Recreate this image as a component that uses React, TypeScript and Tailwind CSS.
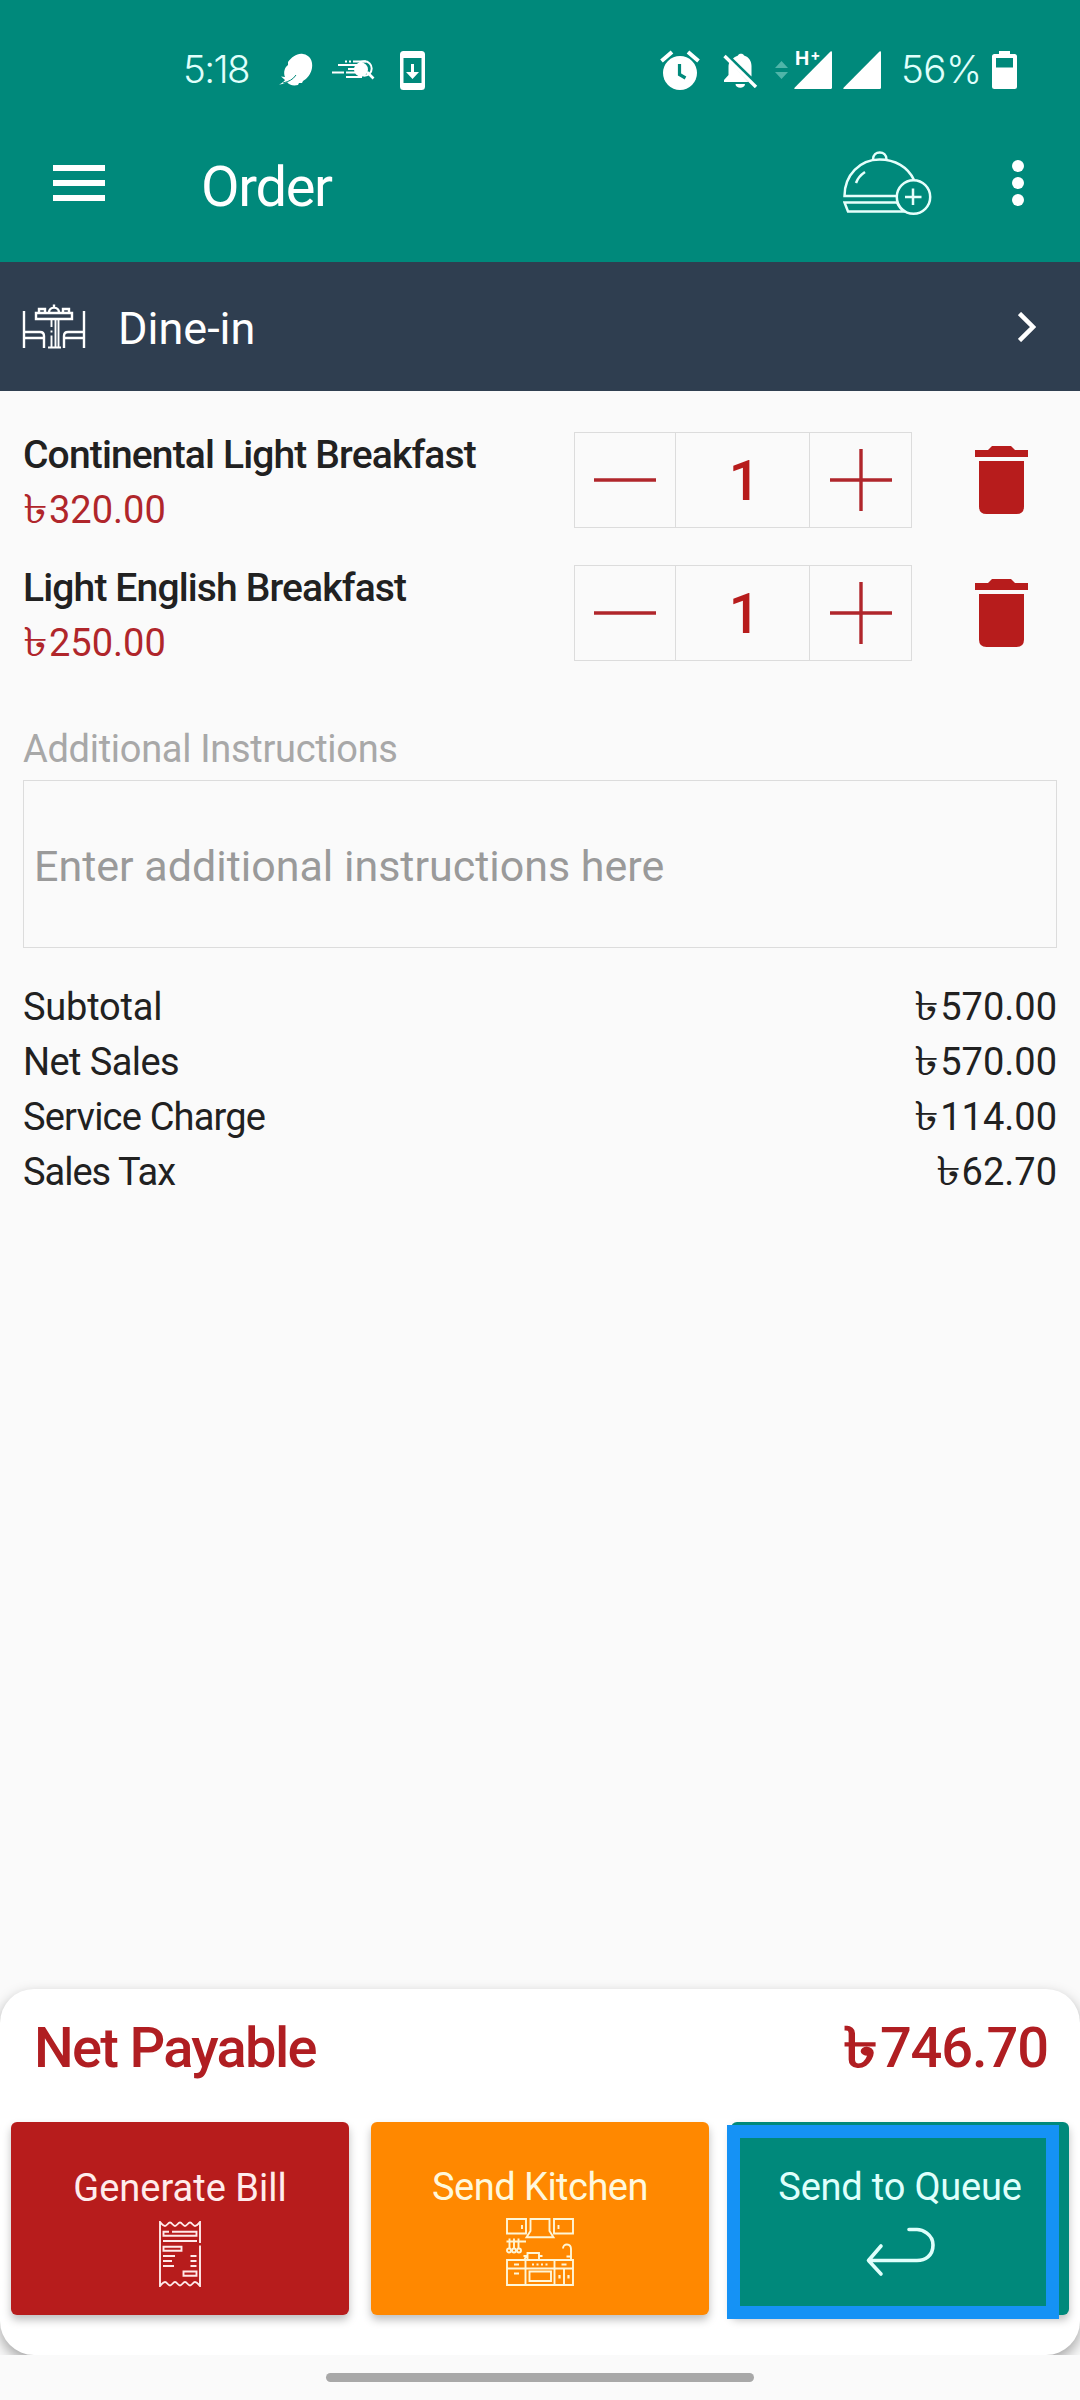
import React from 'react';
import clsx from 'clsx';

const items = [
  { name: 'Continental Light Breakfast', price: '320.00', qty: 1 },
  { name: 'Light English Breakfast', price: '250.00', qty: 1 },
];

const totals = [
  { label: 'Subtotal', amount: '570.00', tracking: 'tracking-[-0.2px]' },
  { label: 'Net Sales', amount: '570.00', tracking: 'tracking-[-0.6px]' },
  { label: 'Service Charge', amount: '114.00', tracking: 'tracking-[-0.8px]' },
  { label: 'Sales Tax', amount: '62.70', tracking: 'tracking-[-1px]' },
];

/* ---------- status bar icons ---------- */

function FeatherIcon() {
  return (
    <svg width="34" height="34" viewBox="0 0 34 34" fill="#fff">
      <path d="M0 31.500 C3 30 5 28.500 6 27 L2 23.500 L6 24 C4 19 6 14 9 12 L9 9 C13 4 18 0 24 1 C31 2 34 8 33 15 C32 21 28 26 24 28 L23 30 L20 30 L19 32 C14 33 10 32 8 29 C5 30.500 3 31.500 0 31.500 Z" />
      <path d="M4 30 C10 28.500 14 26.500 17 22" fill="none" stroke="#00897b" strokeWidth="1" />
    </svg>
  );
}

function FastSearchIcon() {
  return (
    <svg width="43" height="20" viewBox="0 0 43 20" fill="none" stroke="#fff" strokeWidth="2">
      <path d="M13 1.500 H15 M17 1.500 H19 M21 1.500 H34 M6 5 H26 M16 9 H26 M0 12.500 H12 M14 12.500 H26 M14 17 H30" />
      <circle cx="29" cy="9.500" r="6" fill="#fff" />
      <circle cx="32.500" cy="8.500" r="7.200" />
      <path d="M35 12 L41.500 18.500" strokeWidth="2.600" />
    </svg>
  );
}

function PhoneDownloadIcon() {
  return (
    <svg width="25" height="39" viewBox="0 0 25 39">
      <path fill="#fff" fillRule="evenodd" d="M3.500 0 H21.500 Q25 0 25 3.500 V35.500 Q25 39 21.500 39 H3.500 Q0 39 0 35.500 V3.500 Q0 0 3.500 0 Z M3.500 7 V32 H21.500 V7 Z" />
      <path fill="#fff" d="M11 13 H14 V21 H19 L12.500 28 L6 21 H11 Z" />
    </svg>
  );
}

function AlarmIcon() {
  return (
    <svg width="40" height="40" viewBox="0 0 40 40">
      <circle cx="20" cy="23" r="17" fill="#fff" />
      <path d="M1.500 11 L12 2 M38.500 11 L28 2" stroke="#fff" strokeWidth="4" />
      <path d="M19.500 14 V24.500 L25.500 28" fill="none" stroke="#00897b" strokeWidth="3.200" />
    </svg>
  );
}

function BellOffIcon() {
  return (
    <svg width="35" height="35" viewBox="0 0 35 35" fill="#fff">
      <path d="M10 5.500 C12 3.500 14 3 15 2.500 C15.500 0 20.500 0 21 2.500 C26 4 28.500 8 28.500 13 V23.500 Z" />
      <path d="M6.500 9 C5.800 10.500 5.500 12 5.500 14 V22 L1 27 V29 H25.500 Z" />
      <path d="M12.500 31 H22 C22 36 12.500 36 12.500 31 Z" />
      <path d="M1.500 3 L33 34" stroke="#fff" strokeWidth="3.400" />
    </svg>
  );
}

function SignalIcon() {
  return (
    <svg width="38" height="38" viewBox="0 0 38 38" fill="#fff">
      <path d="M36.500 0.500 Q38 -0.500 38 1.500 V36.500 Q38 38 36.500 38 H1.500 Q-0.500 38 0.800 36.500 Z" />
    </svg>
  );
}

function BatteryIcon() {
  return (
    <svg width="25" height="38" viewBox="0 0 25 38" fill="#fff">
      <path fillRule="evenodd" d="M7 0 H18 V3 H22.500 Q25 3 25 5.500 V35.500 Q25 38 22.500 38 H2.500 Q0 38 0 35.500 V5.500 Q0 3 2.500 3 H7 Z M4 7 V16.500 H21 V7 Z" />
    </svg>
  );
}

/* ---------- app icons ---------- */

function ClocheIcon() {
  return (
    <svg width="89" height="65" viewBox="0 0 89 65" fill="none" stroke="#e6fffc" strokeWidth="2.500">
      <path d="M54 45 H1.500 C1.500 24 17 8.500 36.500 8.500 C52 8.500 65 16 71 29" />
      <path d="M30 8.500 C30 -1 43.500 -1 43.500 8.500" />
      <path d="M13 32 C14.500 27.500 17.500 24 22 21" />
      <path d="M54 51.500 H1.500 L5 60.500 H62 C58 58.500 56 56 54 51.500" />
      <circle cx="70.500" cy="46" r="16.700" />
      <path d="M62 46 H78.500 M70 37.500 V54" />
    </svg>
  );
}

function DineInIcon() {
  return (
    <svg width="64" height="45" viewBox="0 0 64 45" fill="none" stroke="#fff" strokeWidth="2.400">
      <path d="M2 7 V44 M2 28 H18 Q22 28 22 32 V44 M2 34 H22" />
      <path d="M62 7 V44 M62 28 H46 Q42 28 42 32 V44 M62 34 H42" />
      <path d="M14 9 H50 V15 H14 Z" />
      <path d="M17 8.500 V5 H23 V8.500 M41 8.500 V5 H47 V8.500" />
      <path d="M27 8.500 C27 2 37 2 37 8.500 M32 0.500 V4" />
      <path d="M29.500 16 V23 M29.500 26.500 V28.500 M29.500 31.500 V43 M33.500 16 V43 M36.500 16 V43 M26 43.500 H39" strokeWidth="1.900" />
    </svg>
  );
}

function TrashIcon() {
  return (
    <svg width="53" height="68" viewBox="0 0 53 68" fill="#b71c1c">
      <path d="M0 4 H13 L17 0 H36 L40 4 H53 V11 H0 Z" />
      <path d="M4 15 H49 V60.500 Q49 68 41.500 68 H11.500 Q4 68 4 60.500 Z" />
    </svg>
  );
}

function ReceiptIcon() {
  return (
    <svg width="42" height="66" viewBox="0 0 42 66" fill="none" stroke="#ffe9e9" strokeWidth="1.900">
      <path d="M41 22 V1 C39 3 38 5 36 5 C34 5 33 1.500 31 1.500 C29 1.500 28 5 26 5 C24 5 23 1.500 21 1.500 C19 1.500 18 5 16 5 C14 5 13 1.500 11 1.500 C9 1.500 8 5 6 5 C4 5 3 3 1 1 V65 C3 63 4 61 6 61 C8 61 9 64.500 11 64.500 C13 64.500 14 61 16 61 C18 61 19 64.500 21 64.500 C23 64.500 24 61 26 61 C28 61 29 64.500 31 64.500 C33 64.500 34 61 36 61 C38 61 39 63 41 65 V24.500" />
      <path d="M10 10.700 H4.500 V14.800 H37.500 V10.700 H13" />
      <path d="M4 20 H38 M4.500 25.800 H22.500 V29.800 H4.500 Z" />
      <path d="M4 35 H16 M4 40 H13 M4 45 H15 M31.500 35 H37.500 M31.500 40 H37.500 M31.500 45 H37.500" />
      <path d="M24.500 50.500 H37.500 V54.800 H24.500 Z" />
    </svg>
  );
}

function KitchenIcon() {
  return (
    <svg width="68" height="68" viewBox="0 0 68 68" fill="none" stroke="#fff6d6" strokeWidth="1.900">
      <path d="M1 1 H20 V15.500 H1 Z M48 1 H67 V15.500 H48 Z M16 7 V11 M52.500 7 V11" />
      <path d="M24.500 1 H43.500 V13 L47.500 19.300 H20.500 L24.500 13 Z" />
      <path d="M0.500 23.500 H20 M3.500 20.500 V30 M8 20.500 V30 M12.500 20.500 V30" />
      <circle cx="3" cy="32.500" r="2" />
      <circle cx="8" cy="32.500" r="2" />
      <circle cx="13" cy="32.500" r="2" />
      <path d="M21.500 41 V35 H33 V41 M17.500 38 H21 M33.500 38 H36.500 M21.500 37 L18.500 41" />
      <path d="M65 41 V31 C65 25 57 25 57 30.500 M65 38.500 H60.500" />
      <path d="M1 42 H67 V67 H1 Z M19.500 42 V67 M48.500 42 V67 M1 50.500 H67 M58 50.500 V67" />
      <path d="M23.500 53.500 H45 V63 H23.500 Z" />
      <path d="M8 46.500 H13 M8 55.500 H13 M55.500 46.500 H60.500 M53.500 57 V60.500 M62.500 57 V60.500 M26 46.500 H28 M30.500 46.500 H32.500 M35 46.500 H37 M39.500 46.500 H41.500" strokeWidth="2.200" />
    </svg>
  );
}

function ReturnIcon() {
  return (
    <svg width="69" height="50" viewBox="0 0 69 50" fill="none" stroke="#dffffb" strokeWidth="3.600" strokeLinecap="round" strokeLinejoin="round">
      <path d="M43 2.500 H51 C56 2.500 67 7 67 18 C67 29 59 33.500 51 33.500 H2.500 M15 19 L2.500 33.500 L15 47" />
    </svg>
  );
}

/* ---------- building blocks ---------- */

function Taka({ amount, large }: { amount: string; large?: boolean }) {
  return (
    <span className="inline-flex items-baseline whitespace-nowrap">
      <span
        className={clsx(
          'inline-block origin-left scale-x-125 leading-none',
          large ? 'mr-[9px] text-[56px] font-bold' : 'mr-[6px] text-[40px]'
        )}
      >
        ৳
      </span>
      <span className={clsx(large && 'tracking-[-1.1px]')}>{amount}</span>
    </span>
  );
}

function Stepper({ qty }: { qty: number }) {
  return (
    <div className="w-[338px] h-24 grid grid-cols-[101px_1fr_101px] border border-[#dcdcdc] divide-x divide-[#dcdcdc]">
      <button className="flex items-center justify-center">
        <svg width="62" height="62" viewBox="0 0 62 62" stroke="#b0262b" strokeWidth="3.400">
          <path d="M0 31 H62" />
        </svg>
      </button>
      <span className="flex items-center justify-center pt-[3px] pl-1 text-[55px] font-medium text-[#b71c1c]">{qty}</span>
      <button className="flex items-center justify-center">
        <svg width="62" height="62" viewBox="0 0 62 62" stroke="#b0262b" strokeWidth="3.400">
          <path d="M0 31 H62 M31 0 V62" />
        </svg>
      </button>
    </div>
  );
}

export default function App() {
  return (
    <div className="w-[1080px] h-[2400px] flex flex-col overflow-hidden bg-[#fafafa] font-['Roboto',sans-serif] text-[#212121]">
      {/* Header */}
      <header className="h-[262px] shrink-0 bg-[#00897b] text-white">
        <div className="h-[140px] flex items-center pl-[183px] pr-[63px] font-['Inter',sans-serif] font-light text-[38.500px]">
          <span className="w-[96px] tracking-[-1.600px] text-[#e0fffb]">5:18</span>
          <FeatherIcon />
          <span className="ml-[19px]"><FastSearchIcon /></span>
          <span className="ml-[25px]"><PhoneDownloadIcon /></span>
          <div className="ml-auto flex items-center">
            <AlarmIcon />
            <span className="ml-[23px]"><BellOffIcon /></span>
            <svg className="ml-[17px]" width="13" height="18" viewBox="0 0 13 18" fill="#4fb5a9">
              <path d="M6.500 0 L13 7 H0 Z M6.500 18 L13 11 H0 Z" />
            </svg>
            <div className="relative ml-[6px]">
              <SignalIcon />
              <span className="absolute left-[1px] top-[-3px] text-[19px] leading-[22px] font-bold">
                H<sup className="relative top-[-5px] left-px text-[15px] leading-none align-baseline">+</sup>
              </span>
            </div>
            <span className="ml-[11px]"><SignalIcon /></span>
            <span className="ml-[20px] w-[91px] tracking-[-0.500px] text-[#e0fffb]">56%</span>
            <BatteryIcon />
          </div>
        </div>
        <div className="h-[86px] flex items-center pl-[53px] pr-[56px]">
          <div className="w-[52px] flex flex-col gap-[9px]">
            <span className="h-[6px] bg-white" />
            <span className="h-[6px] bg-white" />
            <span className="h-[6px] bg-white" />
          </div>
          <h1 className="ml-[96px] pt-[7px] text-[56px] tracking-[-1.300px]">Order</h1>
          <span className="ml-auto"><ClocheIcon /></span>
          <div className="ml-[80px] flex flex-col gap-[5px]">
            <span className="size-3 rounded-full bg-white" />
            <span className="size-3 rounded-full bg-white" />
            <span className="size-3 rounded-full bg-white" />
          </div>
        </div>
      </header>

      {/* Order type */}
      <div className="h-[129px] shrink-0 flex items-center pl-[22px] pr-[44px] bg-[#2f3e50] text-white">
        <DineInIcon />
        <span className="ml-[32px] pt-1 text-[45px]">Dine-in</span>
        <svg className="ml-auto" width="18" height="30" viewBox="0 0 18 30" fill="none" stroke="#fff" strokeWidth="4.500">
          <path d="M1.500 1.500 L15 15 L1.500 28.500" />
        </svg>
      </div>

      <main className="flex-1 min-h-0 flex flex-col overflow-hidden">
        <section className="px-[23px] pt-[37px] flex flex-col gap-[23px]">
          {items.map(item => (
            <div key={item.name} className="h-[110px] flex">
              <div className="w-[551px]">
                <p className="h-[55px] leading-[55px] text-[39px] font-medium tracking-[-0.850px] whitespace-nowrap">
                  {item.name}
                </p>
                <p className="h-[55px] leading-[55px] text-[38px] text-[#b0262b]">
                  <Taka amount={item.price} />
                </p>
              </div>
              <div className="pt-1"><Stepper qty={item.qty} /></div>
              <button className="ml-[63px] mt-[18px] self-start"><TrashIcon /></button>
            </div>
          ))}
        </section>

        <section className="mt-[53px] px-[23px]">
          <label className="block h-[50px] leading-[50px] text-[38px] tracking-[-0.300px] text-[#a8a8a8]">
            Additional Instructions
          </label>
          <div className="mt-[6px] h-[168px] flex items-center border border-[#dcdcdc] pl-[10px] pt-[5px] text-[43px] text-[#9a9a9a]">
            Enter additional instructions here
          </div>
        </section>

        <section className="mt-[32px] px-[23px]">
          {totals.map(row => (
            <div key={row.label} className="h-[55px] flex justify-between leading-[55px] text-[38px]">
              <span className={row.tracking}>{row.label}</span>
              <Taka amount={row.amount} />
            </div>
          ))}
        </section>

        {/* Payment card */}
        <section className="mt-auto h-[366px] shrink-0 rounded-[34px] bg-white pt-[26px] shadow-[0_6px_14px_rgba(0,0,0,0.35)]">
          <div className="h-[66px] flex justify-between pl-[34px] pr-[32px] text-[56px] leading-[66px] font-medium text-[#b01e22]">
            <span className="tracking-[-1.700px]">Net Payable</span>
            <Taka amount="746.70" large />
          </div>
          <div className="mt-[41px] grid grid-cols-3 gap-[22px] px-[11px] text-[38px] leading-[56px] text-white">
            <button className="h-[193px] flex flex-col items-center rounded-[6px] bg-[#b71c1c] pt-[38px] shadow-[0_5px_8px_rgba(0,0,0,0.25)]">
              <span className="text-[#ffecec]">Generate Bill</span>
              <span className="mt-[5px]"><ReceiptIcon /></span>
            </button>
            <button className="h-[193px] flex flex-col items-center rounded-[6px] bg-[#ff8800] pt-[37px] shadow-[0_5px_8px_rgba(0,0,0,0.25)]">
              <span className="text-[#fff8dc] tracking-[-0.500px]">Send Kitchen</span>
              <span className="mt-[3px]"><KitchenIcon /></span>
            </button>
            <button className="relative h-[193px] flex flex-col items-center rounded-[6px] bg-[#00897b] pt-[37px] shadow-[0_5px_8px_rgba(0,0,0,0.25)]">
              <span className="text-[#dffffb] tracking-[-0.200px]">Send to Queue</span>
              <span className="mt-[12px]"><ReturnIcon /></span>
              {/* focus frame */}
              <span className="absolute -left-1 top-[3px] w-[332px] h-[194px] border-[13px] border-[#1592f5]" />
            </button>
          </div>
        </section>
      </main>

      {/* Gesture bar */}
      <footer className="relative h-[45px] shrink-0 flex justify-center bg-[#fafafa] pt-[18px]">
        <span className="w-[428px] h-[9px] rounded-full bg-[#a8a8a8]" />
      </footer>
    </div>
  );
}
